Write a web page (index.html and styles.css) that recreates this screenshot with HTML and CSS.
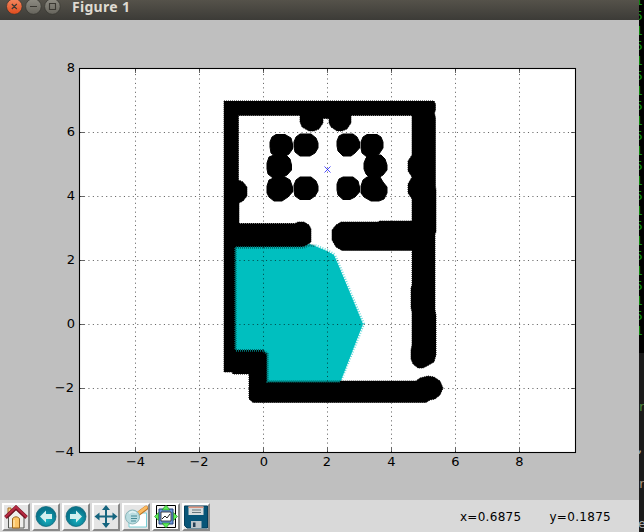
FILE: index.html
```html
<!DOCTYPE html>
<html lang="en">
<head>
<meta charset="utf-8">
<title>Figure 1</title>
<link rel="stylesheet" href="styles.css">
</head>
<body>
<div class="desktop">
<main class="window">
  <header class="titlebar">
    <svg class="controls" viewBox="0 0 64 20">
      <defs>
        <linearGradient id="red" x1="0" y1="0" x2="0" y2="1"><stop offset="0" stop-color="#f58a62"/><stop offset="1" stop-color="#df4a1b"/></linearGradient>
        <linearGradient id="gray" x1="0" y1="0" x2="0" y2="1"><stop offset="0" stop-color="#8f8d84"/><stop offset="1" stop-color="#66645c"/></linearGradient>
      </defs>
      <g stroke="#34332e" stroke-width=".7">
        <circle cx="14.3" cy="6.5" r="7.8" fill="url(#red)"/>
        <circle cx="33.4" cy="6.5" r="7.8" fill="url(#gray)"/>
        <circle cx="52.4" cy="6.5" r="7.8" fill="url(#gray)"/>
      </g>
      <path d="M11.8 4l5 5m0-5l-5 5M30 6.5h7M49.5 3.5h6v6h-6z" fill="none" stroke="#3a3832" stroke-width="1.1"/>
    </svg>
    <h1 class="title">Figure 1</h1>
  </header>

  <svg class="plot" viewBox="0 20 639 480">
    <rect x="79.5" y="68.5" width="496" height="384" fill="#fff"/>
    <path class="free" d="M235 247H303L309 244L315 246L327 251L334 255L338 264L363 324L340 383H266V352H235Z"/>
    <path class="edge" d="M315 246L327 251L334 255L338 264L363 324L340 381"/>
    <g class="walls">
      <path d="M224 101H434L435.500 104V110L434.500 113L435.500 118V186L436 190V232L435 234V310L436 315V355L434 362L427 366L423 368H418L413 364L411 359V350L412 345V312L411 308V288L412 285V250.500H342L336 247L332 240V230L336 225L341 222H379V221H412V199L408 193V184L412 177L408 171V161L412 155V115.500H351V123L347 129L342 131H337L331 127L329 123V118.500H323V123L319 129L314 131H309L302 127L300 122V115.500H238.500V180L243 182L247 187V196L243 201L239 203V223.500H295L298 222H304L309 225L311 229V242L307 245L303 247H235V350H263L267 354V382H340V381H416L420 378L428 376L434 377L440 381L443 388L440 395L435 399L430 400L426 402.500H253L249 399V374H233L232 372H224Z"/>
    </g>
    <g class="obstacles">
      <path d="M276 134.500H285L291 138L292.500 144V149L289 154L284 157H276L271 153L270 147V142L272 137Z"/>
      <path d="M300 134H311L316 138L318 143V148L315 153L310 156H300L295 152L294 147V142L296 137Z"/>
      <path d="M274 155H286L290 159L291.500 165V170L287 175L281 178H273L268 174L267 169V163L269 157Z"/>
      <path d="M276 177H285L290 180L292.500 187V192L288 197L282 201H274L269 197L267 193V186L269 180Z"/>
      <path d="M300 177H311L316 181L318 186V191L315 196L310 199.500H300L295 196L294 191V185L296 180Z"/>
      <path d="M343 134H353L357 137L359.500 142V148L355 153L351 156H343L338 151L337 146V141L339 136Z"/>
      <path d="M367 134.500H377L381 137L383 142V148L379 154L374 157H367L362 153L361 148V142L363 137Z"/>
      <path d="M369 155H381L385 159L387 165V170L383 175L378 178H370L366 174L364 169V163L366 158Z"/>
      <path d="M367 177H380L383 182L387 187V193L384 199L379 201H371L364 197L361 193V186L363 180Z"/>
      <path d="M343 177H353L358 181L359.500 187V192L355 197L350 199.500H343L338 195L337 190V184L339 179Z"/>
    </g>
    <path class="fringe" d="M235.500 349V247.500H304L309 245L315 246M236 350.500H263L267.500 354V381.500H340"/>
    <path class="grid" d="M135.500 452.500V68.500M199.500 452.500V68.500M263.500 452.500V68.500M327.500 452.500V68.500M391.500 452.500V68.500M455.500 452.500V68.500M519.500 452.500V68.500M79.500 132.500H575.500M79.500 196.500H575.500M79.500 260.500H575.500M79.500 324.500H575.500M79.500 388.500H575.500"/>
    <path class="ticks" d="M135.500 452v-4M199.500 452v-4M263.500 452v-4M327.500 452v-4M391.500 452v-4M455.500 452v-4M519.500 452v-4M135.500 69v4M199.500 69v4M263.500 69v4M327.500 69v4M391.500 69v4M455.500 69v4M519.500 69v4M80 132.500h4M80 196.500h4M80 260.500h4M80 324.500h4M80 388.500h4M575 132.500h-4M575 196.500h-4M575 260.500h-4M575 324.500h-4M575 388.500h-4"/>
    <path class="marker" d="M324.500 166.500l6 6m0-6l-6 6"/>
    <rect class="frame" x="79.500" y="68.500" width="496" height="384"/>
    <g class="labels" text-anchor="end">
      <text x="75" y="72">8</text><text x="75" y="136">6</text><text x="75" y="200">4</text><text x="75" y="264">2</text><text x="75" y="328">0</text><text x="74" y="392">−2</text><text x="74" y="456">−4</text>
    </g>
    <g class="labels" text-anchor="middle">
      <text x="135.500" y="466">−4</text><text x="199" y="466">−2</text><text x="264" y="466">0</text><text x="327" y="466">2</text><text x="391.500" y="466">4</text><text x="455.500" y="466">6</text><text x="519.500" y="466">8</text>
    </g>
  </svg>

  <footer class="toolbar">
    <div class="buttons">
      <button class="tool" aria-label="Home"><svg viewBox="0 0 24 24">
        <path d="M4 3h3v8H4z" fill="#f9d28c" stroke="#a56f25"/>
        <path d="M4.500 12L12 4.500L20 12V23H4.500Z" fill="#eeeeec" stroke="#555753"/>
        <path d="M1.500 12.500L12 2.500L22.500 12.500" fill="none" stroke="#761323" stroke-width="3.800"/><path d="M1.500 12L12 2L22.500 12" fill="none" stroke="#b72b43" stroke-width="2"/>
        <path d="M8.500 23V13.500Q12 10 15.500 13.500V23Z" fill="#fcc567" stroke="#9b641d"/><path d="M10 15v7" stroke="#fff0c4"/>
      </svg></button>
      <button class="tool" aria-label="Back"><svg viewBox="0 0 24 24">
        <defs><radialGradient id="ball" cx=".55" cy=".65"><stop stop-color="#18b5c4"/><stop offset="1" stop-color="#08758c"/></radialGradient></defs>
        <circle cx="12" cy="11.500" r="10" fill="url(#ball)" stroke="#086276" stroke-width=".7"/><path d="M6 11.500L12 5.500V9H18V14H12V17.500Z" fill="#d1f0ef"/>
      </svg></button>
      <button class="tool" aria-label="Forward"><svg viewBox="0 0 24 24"><circle cx="12" cy="11.500" r="10" fill="url(#ball)" stroke="#086276" stroke-width=".7"/><path d="M18 11.500L12 5.500V9H6V14H12V17.500Z" fill="#d1f0ef"/></svg></button>
      <button class="tool" aria-label="Pan"><svg viewBox="0 0 24 24"><path d="M12 3V20M3 11.500H21" stroke="#16657f" stroke-width="2"/><path d="M12 0l4 5H8zM12 23l4-5H8zM.500 11.500l5-4v8zM23.500 11.500l-5-4v8z" fill="#16657f"/></svg></button>
      <button class="tool" aria-label="Zoom"><svg viewBox="0 0 24 24">
        <path d="M5 8H22.500V22H5z" fill="#fff" stroke="#78ced5"/><path d="M14 9L22 3" stroke="#bd7322" stroke-width="4.500" stroke-linecap="round"/><path d="M14 8.500L22 2.500" stroke="#fcbb62" stroke-width="3" stroke-linecap="round"/>
        <circle cx="8.500" cy="12" r="7" fill="#b9dce0" stroke="#8ab5b9"/><path d="M5 8.500Q8 5 12 8" fill="none" stroke="#e4f3f4" stroke-width="1.500"/><path d="M7 11h6M7 13.500h6M7 16h5" stroke="#458995"/>
      </svg></button>
      <button class="tool light" aria-label="Configure subplots"><svg viewBox="0 0 24 24">
        <path d="M2.500 .500H21.500V22.500H2.500z" fill="#f4f4f4" stroke="#000"/><path d="M5 4H19V19H5z" fill="#6b93d8" stroke="#23457f"/><path d="M7 7H17V16H7z" fill="#fff" stroke="#222" stroke-width=".8"/><path d="M8 14l3-3 2 2 3-4" fill="none" stroke="#222"/>
        <path d="M12 0l4 5H8zM12 23l4-5H8zM.500 11.500l4-4v8zM23.500 11.500l-4-4v8z" fill="#5cec55" stroke="#17721d" stroke-width=".6"/>
      </svg></button>
      <button class="tool" aria-label="Save"><svg viewBox="0 0 24 24">
        <path d="M.500 1H23.500V23H3L.500 20.500Z" fill="#075578" stroke="#053e5a"/><path d="M4.500 1.500H19.500V10H4.500z" fill="#d8dcdd"/><path d="M4.500 1.500H19.500V3H4.500z" fill="#de937d"/><path d="M8 5h9M8 7.500h9" stroke="#65767d"/><path d="M7 16H17.500V23H7z" fill="#bdc5c9"/><path d="M9 17.500H11.500V22H9z" fill="#243f55"/>
      </svg></button>
    </div>
    <output class="coords"><span>x=0.6875</span><span>y=0.1875</span></output>
  </footer>
</main>
<aside class="behind">
  <div class="terminal"><div class="lines">1<br>5<br>1<br>5<br>1<br>5<br>1<br>5<br>1<br>5<br>1<br>5<br>1<br>5<br>1<br>5<br>1<br>5<br>1<br>5<br>1<br>5<br>1</div></div>
  <div class="editor"><span class="green">r</span><span>,</span><span class="warm">r</span><span>e</span></div>
</aside>
</div>
</body>
</html>
```
FILE: styles.css
```css
* { box-sizing: border-box; }
body { margin: 0; background: #000; overflow: hidden; }
.desktop { display: grid; grid-template-columns: 639px 5px; width: 644px; height: 532px; overflow: hidden; }
.window { display: grid; grid-template-rows: 20px 480px 32px; height: 532px; background: #bfbfbf; font-family: "DejaVu Sans", sans-serif; }
.titlebar { display: flex; align-items: flex-start; background: linear-gradient(#55524a, #3c3b37); }
.controls { width: 64px; height: 20px; }
.title { margin: -2px 0 0 8px; color: #dfdbd2; font: bold 14px/18px "Noto Sans", sans-serif; letter-spacing: 0.3px; white-space: nowrap; }
.plot { display: block; width: 639px; height: 480px; }
.free { fill: #00bfbf; }
.walls path { fill: #000; stroke: #000; stroke-width: 1; stroke-dasharray: 1 1; }
.obstacles path { fill: #000; stroke: #000; stroke-width: 1; stroke-linejoin: round; }
.fringe { fill: none; stroke: #006d6d; stroke-width: 2.5; stroke-dasharray: 1 1; }
.edge { fill: none; stroke: #00bfbf; stroke-width: 4; stroke-dasharray: 1 1.5; opacity: .6; }
.grid { fill: none; stroke: #000; stroke-width: .6; stroke-dasharray: 1.11 3.33; }
.ticks { fill: none; stroke: #000; stroke-width: .6; }
.marker { fill: none; stroke: #00f; stroke-width: .7; }
.frame { fill: none; stroke: #000; stroke-width: 1.1; }
.labels { fill: #000; font: 13px "DejaVu Sans", sans-serif; }
.toolbar { display: flex; justify-content: space-between; overflow: hidden; background: #d9d9d9; }
.buttons { display: flex; gap: 2px; padding: 3px 0 0 2px; }
.tool { width: 28px; height: 28px; padding: 0; border: 2px solid; border-color: #fff #888 #888 #fff; background: #e5e5e5; }
.tool.light { background: #fff; }
.tool svg { display: block; width: 24px; height: 24px; }
.coords { display: flex; gap: 28px; padding: 9px 28px 0 0; font-size: 12px; line-height: 16px; letter-spacing: .3px; white-space: nowrap; }
.behind { overflow: hidden; width: 5px; height: 532px; font: 13px/15px "DejaVu Sans Mono", monospace; }
.terminal { height: 353px; overflow: hidden; background: #000; color: #129212; }
.lines { margin: -7px 0 0 -4px; }
.editor { display: grid; grid-template-rows: 41px 36px 40px 20px; height: 179px; padding-top: 46px; background: #1b1b1b; color: #aaa; }
.editor span { margin-left: -1px; }
.editor span:nth-child(2) { margin-left: -3px; }
.green { color: #4f873e; }
.warm { color: #aa927c; }
```
